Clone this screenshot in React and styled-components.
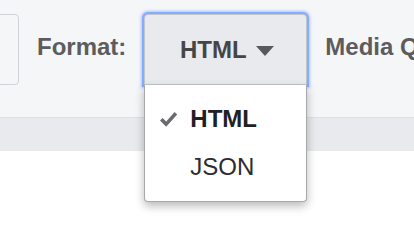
import React from 'react'
import styled, { createGlobalStyle } from 'styled-components'

const GlobalStyle = createGlobalStyle`
  html, body {
    margin: 0;
    padding: 0;
    background: #ffffff;
  }
  body {
    font-family: "Liberation Sans", Arial, sans-serif;
    width: 414px;
    height: 248px;
    overflow: hidden;
  }
`

const Page = styled.div`
  width: 414px;
  height: 248px;
  background: #ffffff;
  overflow: hidden;
`

const Toolbar = styled.div`
  position: relative;
  display: flex;
  align-items: flex-start;
  gap: 18px;
  height: 118px;
  padding-top: 14px;
  box-sizing: border-box;
  background: #f5f6f8;
  border-bottom: 1px solid #dedfe3;
  white-space: nowrap;
  overflow: visible;
  z-index: 2;
`

const SearchBox = styled.div`
  flex: none;
  width: 120px;
  height: 71px;
  margin-left: -101px;
  box-sizing: border-box;
  border: 1px solid #d0d2d6;
  border-radius: 4px;
  background: #f5f6f8;
`

const Label = styled.span`
  flex: none;
  margin-top: 9px;
  font-size: 24px;
  line-height: 48px;
  font-weight: 700;
  color: #5c5c5e;
`

const SelectWrap = styled.div`
  position: relative;
  flex: none;
`

const SelectButton = styled.button`
  display: flex;
  align-items: center;
  justify-content: center;
  gap: 9px;
  width: 163px;
  height: 71px;
  box-sizing: border-box;
  padding: 0 0 0 2px;
  border: 1px solid #c4c5c9;
  border-radius: 4px 4px ${p => (p.$open ? '0 0' : '4px 4px')};
  background: #e9eaee;
  box-shadow: 0 0 0 2px #86acff, 0 0 3px 3px rgba(120, 160, 255, 0.6);
  font-family: inherit;
  font-size: 24px;
  line-height: 48px;
  font-weight: 700;
  color: #454547;
  outline: none;
`

const Menu = styled.ul`
  position: absolute;
  top: 71px;
  left: 0;
  width: 163px;
  margin: 0;
  padding: 10px 0 10px;
  box-sizing: border-box;
  list-style: none;
  background: #ffffff;
  border: 1px solid #a8a8aa;
  border-top: none;
  border-radius: 0 0 4px 4px;
  box-shadow: 0 4px 10px rgba(0, 0, 0, 0.28);
`

const MenuItem = styled.li`
  position: relative;
  height: 48px;
  padding-left: 45px;
  font-size: 24px;
  line-height: 48px;
  font-weight: ${p => (p.$selected ? 700 : 400)};
  color: ${p => (p.$selected ? '#1e2126' : '#2b2c2f')};
`

const Check = styled.svg`
  position: absolute;
  left: 14px;
  top: 16px;
  width: 19px;
  height: 17px;
  filter: blur(0.4px);
`

const Band = styled.div`
  height: 33px;
  background: #e9eaed;
`

const Caret = () => (
  <svg width="18" height="10" viewBox="0 0 18 10" style={{ marginTop: 3 }}>
    <polygon points="0,0 18,0 9,10" fill="#58595c" />
  </svg>
)

const options = ['HTML', 'JSON']

export default function App() {
  const selected = 'HTML'
  return (
    <Page>
      <GlobalStyle />
      <Toolbar>
        <SearchBox />
        <Label>Format:</Label>
        <SelectWrap>
          <SelectButton $open>
            <span>{selected}</span>
            <Caret />
          </SelectButton>
          <Menu>
            {options.map(opt => (
              <MenuItem key={opt} $selected={opt === selected}>
                {opt === selected && (
                  <Check viewBox="0 0 19 17">
                    <path d="M1 9.5 L3.6 7 L7.2 10.4 L15.6 1 L18.2 3.4 L7.2 15.8 Z" fill="#6a6b6e" />
                  </Check>
                )}
                {opt}
              </MenuItem>
            ))}
          </Menu>
        </SelectWrap>
        <Label>Media Queries:</Label>
      </Toolbar>
      <Band />
    </Page>
  )
}
